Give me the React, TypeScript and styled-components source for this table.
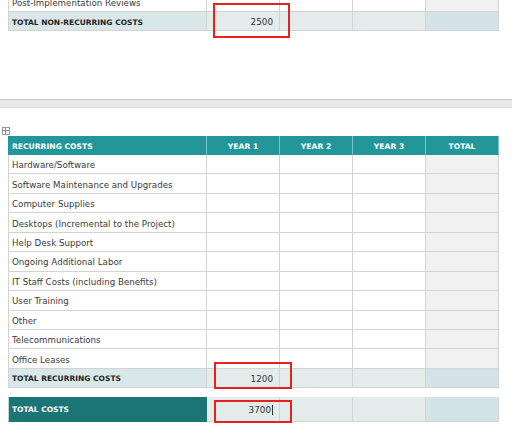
import React from "react";
import styled, { createGlobalStyle, css } from "styled-components";

const Global = createGlobalStyle`
  html, body { margin: 0; padding: 0; background: #ffffff; }
  body { width: 512px; height: 437px; overflow: hidden; font-family: "DejaVu Sans", "Liberation Sans", sans-serif; }
`;

const Page = styled.div`
  width: 512px;
  height: 437px;
  display: flex;
  flex-direction: column;
  overflow: hidden;
`;

const Table = styled.div<{ $mt?: number }>`
  margin-left: 8px;
  width: 491px;
  display: flex;
  flex-direction: column;
  margin-top: ${(p) => p.$mt ?? 0}px;
`;

const COLS = "199px 73px 73px 73px 73px";

const Row = styled.div<{ $h: number }>`
  display: grid;
  grid-template-columns: ${COLS};
  height: ${(p) => p.$h}px;
`;

type Kind = "label" | "year" | "total" | "head" | "headLabel" | "sumLabel" | "sumYear" | "sumTotal" | "grandLabel";

const bg: Record<Kind, string> = {
  label: "#ffffff",
  year: "#ffffff",
  total: "#f1f1f1",
  head: "#23969a",
  headLabel: "#23969a",
  sumLabel: "#dae7e9",
  sumYear: "#e4ebeb",
  sumTotal: "#d4e3e7",
  grandLabel: "#1b7577",
};

const Cell = styled.div<{ $k: Kind }>`
  position: relative;
  box-sizing: border-box;
  display: flex;
  align-items: center;
  background: ${(p) => bg[p.$k]};
  border-right: 1px solid #d3d3d3;
  border-bottom: 1px solid #d3d3d3;
  font-size: 8.7px;
  color: #3a3a3a;
  padding: 2px 3px 0 3px;
  white-space: nowrap;
  &:first-child { border-left: 1px solid #d3d3d3; }
  ${(p) =>
    (p.$k === "head" || p.$k === "headLabel") &&
    css`
      color: #ffffff;
      font-weight: bold;
      font-size: 7.6px;
      border-right-color: #7cc2c4;
      border-bottom-color: #23969a;
      justify-content: center;
      &:first-child { border-left-color: #23969a; }
    `}
  ${(p) => p.$k === "headLabel" && css`justify-content: flex-start;`}
  ${(p) =>
    p.$k === "sumLabel" &&
    css`
      font-weight: bold;
      font-size: 7.5px;
      color: #1f1f1f;
    `}
  ${(p) =>
    p.$k === "grandLabel" &&
    css`
      font-weight: bold;
      font-size: 7.5px;
      color: #ffffff;
      border-color: #1b7577;
      &:first-child { border-left-color: #c9d3d3; }
    `}
`;

const Amount = styled.span`
  margin-left: auto;
  padding-right: 3px;
  font-size: 8.8px;
  color: #333;
`;

const Caret = styled.span`
  display: inline-block;
  width: 1px;
  height: 10px;
  background: #333;
  margin-left: 1px;
  vertical-align: middle;
`;

const Highlight = styled.div<{ $t: number; $b: number; $l: number; $r: number }>`
  position: absolute;
  top: ${(p) => p.$t}px;
  bottom: ${(p) => p.$b}px;
  left: ${(p) => p.$l}px;
  right: ${(p) => p.$r}px;
  border: 2px solid #e3231f;
  pointer-events: none;
  z-index: 2;
`;

const Band = styled.div`
  margin-top: 68px;
  height: 9px;
  background: #e9e9e9;
  border-top: 1px solid #c9c9c9;
  border-bottom: 1px solid #dedede;
  box-sizing: border-box;
`;

const AnchorRow = styled.div`
  height: 28px;
  display: flex;
  align-items: flex-end;
  padding-left: 2px;
  padding-bottom: 1px;
  box-sizing: border-box;
`;

const AnchorIcon = styled.div`
  width: 6px;
  height: 6px;
  border: 1px solid #9a9a9a;
  position: relative;
  background: #fff;
  &::before, &::after {
    content: "";
    position: absolute;
    background: #8a8a8a;
  }
  &::before { left: 2px; top: 0; width: 1px; height: 6px; }
  &::after { top: 2px; left: 0; width: 6px; height: 1px; }
`;

const Gap = styled.div<{ $h: number }>`
  height: ${(p) => p.$h}px;
`;

const items = [
  "Hardware/Software",
  "Software Maintenance and Upgrades",
  "Computer Supplies",
  "Desktops (Incremental to the Project)",
  "Help Desk Support",
  "Ongoing Additional Labor",
  "IT Staff Costs (including Benefits)",
  "User Training",
  "Other",
  "Telecommunications",
  "Office Leases",
];

export default function App() {
  return (
    <Page>
      <Global />
      <Table $mt={-8}>
        <Row $h={20}>
          <Cell $k="label">Post-Implementation Reviews</Cell>
          <Cell $k="year" />
          <Cell $k="year" />
          <Cell $k="year" />
          <Cell $k="total" />
        </Row>
        <Row $h={19}>
          <Cell $k="sumLabel">TOTAL NON-RECURRING COSTS</Cell>
          <Cell $k="sumYear">
            <Amount>2500</Amount>
            <Highlight $t={-9} $b={-8} $l={6} $r={-11} />
          </Cell>
          <Cell $k="sumYear" />
          <Cell $k="sumYear" />
          <Cell $k="sumTotal" />
        </Row>
      </Table>
      <Band />
      <AnchorRow>
        <AnchorIcon />
      </AnchorRow>
      <Table>
        <Row $h={19}>
          <Cell $k="headLabel">RECURRING COSTS</Cell>
          <Cell $k="head">YEAR 1</Cell>
          <Cell $k="head">YEAR 2</Cell>
          <Cell $k="head">YEAR 3</Cell>
          <Cell $k="head">TOTAL</Cell>
        </Row>
        {items.map((t) => (
          <Row $h={19.45} key={t}>
            <Cell $k="label">{t}</Cell>
            <Cell $k="year" />
            <Cell $k="year" />
            <Cell $k="year" />
            <Cell $k="total" />
          </Row>
        ))}
        <Row $h={19}>
          <Cell $k="sumLabel">TOTAL RECURRING COSTS</Cell>
          <Cell $k="sumYear">
            <Amount>1200</Amount>
            <Highlight $t={-7} $b={-2} $l={7} $r={-13} />
          </Cell>
          <Cell $k="sumYear" />
          <Cell $k="sumYear" />
          <Cell $k="sumTotal" />
        </Row>
      </Table>
      <Gap $h={9} />
      <Table>
        <Row $h={25}>
          <Cell $k="grandLabel">TOTAL COSTS</Cell>
          <Cell $k="sumYear">
            <Amount>
              3700
              <Caret />
            </Amount>
            <Highlight $t={3} $b={-2} $l={7} $r={-13} />
          </Cell>
          <Cell $k="sumYear" />
          <Cell $k="sumYear" />
          <Cell $k="sumTotal" />
        </Row>
      </Table>
    </Page>
  );
}
